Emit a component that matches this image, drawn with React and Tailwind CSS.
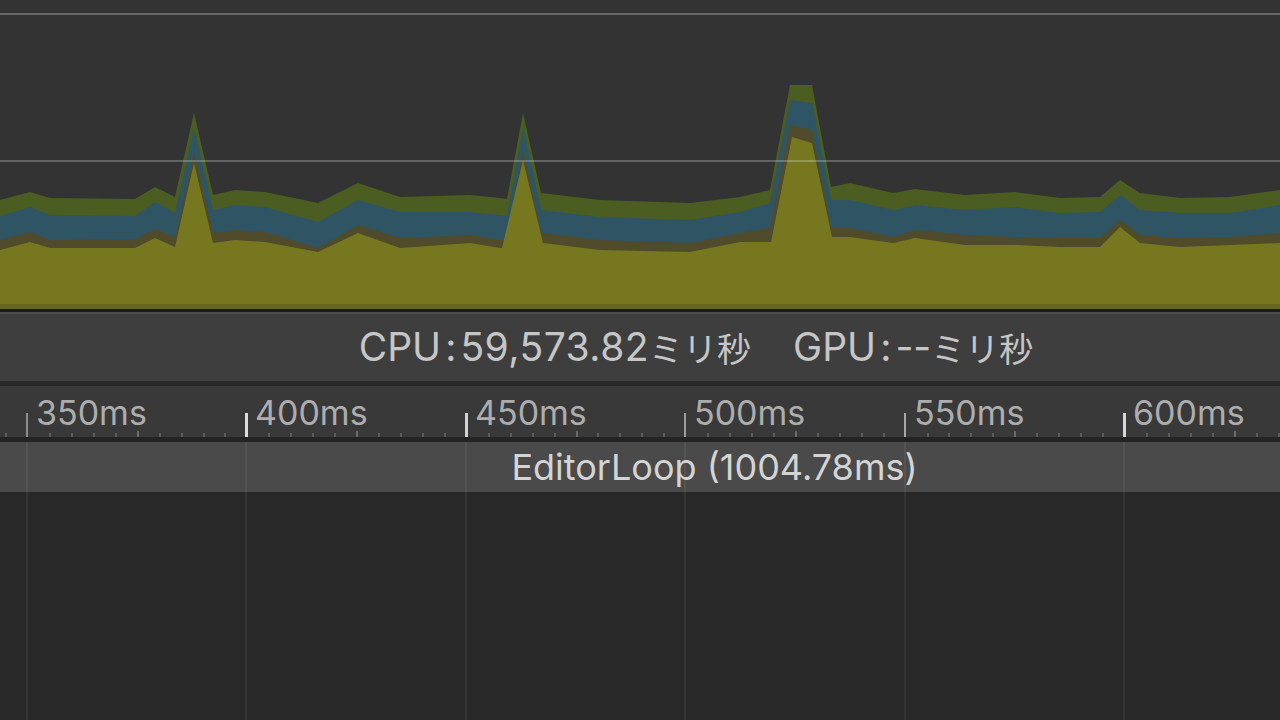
import React from "react";

const FONT = { fontFamily: "Inter, 'Noto Sans CJK JP', 'Noto Sans', sans-serif" };
const CJK = { fontFamily: "'Noto Sans CJK JP', sans-serif" };

// stacked area boundaries, top layer first
const GREEN = [[0,200],[30,192],[50,198],[135,199],[155,187],[175,197],[194,113],[213,195],[235,190],[265,192],[318,203],[358,183],[400,197],[470,195],[500,198],[507,199],[523,113],[541,193],[600,200],[690,203],[740,197],[770,190],[790,85],[812,85],[831,187],[850,183],[893,193],[915,189],[965,195],[1015,192],[1060,198],[1100,197],[1120,180],[1140,193],[1180,198],[1230,197],[1280,190]];
const BLUE = [[0,216],[30,207],[50,215],[135,216],[155,202],[175,213],[194,128],[213,210],[235,205],[265,207],[318,222],[358,200],[400,212],[470,212],[500,215],[507,216],[523,127],[541,210],[600,217],[690,220],[740,212],[770,203],[790,100],[812,103],[831,200],[850,200],[893,210],[915,205],[965,210],[1015,207],[1060,213],[1100,212],[1120,195],[1140,210],[1180,213],[1230,213],[1280,205]];
const DARK = [[0,240],[30,232],[50,240],[135,239],[155,229],[175,237],[194,152],[213,233],[235,230],[265,232],[318,248],[358,225],[400,238],[470,235],[500,240],[507,240],[523,150],[541,233],[600,240],[690,243],[740,233],[770,228],[790,125],[812,130],[831,228],[850,228],[893,237],[915,230],[965,235],[1015,237],[1060,238],[1100,238],[1120,220],[1140,235],[1180,238],[1230,237],[1280,233]];
const YELLOW = [[0,250],[30,242],[50,248],[135,248],[155,238],[175,247],[194,163],[213,243],[235,240],[265,242],[318,252],[358,233],[400,248],[470,243],[500,248],[502,248],[523,160],[543,243],[600,250],[690,252],[740,242],[771,242],[792,137],[812,143],[832,237],[850,237],[893,243],[915,238],[965,245],[1015,245],[1060,247],[1100,247],[1120,227],[1140,243],[1180,247],[1230,245],[1280,243]];

const area = (pts) => "0,309 " + pts.map((p) => p.join(",")).join(" ") + " 1280,309";

const MAJORS = [
  { label: "350ms", tick: "bg-[#8e8e8e] w-[2px]" },
  { label: "400ms", tick: "bg-[#dcdcdc] w-[3px]" },
  { label: "450ms", tick: "bg-[#d2d2d2] w-[3px]" },
  { label: "500ms", tick: "bg-[#9c9c9c] w-[2px]" },
  { label: "550ms", tick: "bg-[#a8a8a8] w-[2px]" },
  { label: "600ms", tick: "bg-[#d6d6d6] w-[3px]" },
];
const START = 27;
const STEP = 219.4;

function Chart() {
  return (
    <div className="relative h-[309px] bg-[#333333]">
      <svg width="1280" height="309" viewBox="0 0 1280 309" className="block">
        <polygon points={area(GREEN)} fill="#4b5d21" />
        <polygon points={area(BLUE)} fill="#2f5565" />
        <polygon points={area(DARK)} fill="#4f4b2b" />
        <polygon points={area(YELLOW)} fill="#777720" />
        <rect x="0" y="304" width="1280" height="5" fill="#66661e" />
        <rect x="0" y="13" width="1280" height="2" fill="#ffffff" fillOpacity="0.25" />
        <rect x="0" y="160" width="1280" height="2" fill="#ffffff" fillOpacity="0.24" />
      </svg>
    </div>
  );
}

function Ruler() {
  const minors = [];
  for (let i = -1; i < 60; i++) {
    const x = START + i * (STEP / 10);
    if (x > 1280) break;
    if (i % 10 === 0) continue;
    const tall = ((i % 10) + 10) % 10 === 5;
    minors.push(
      <div
        key={i}
        className={tall ? "absolute bottom-0 w-[2px] h-[6px] bg-[#6a6a6a]" : "absolute bottom-0 w-[2px] h-[4px] bg-[#5c5c5c]"}
        style={{ left: Math.round(x) }}
      />
    );
  }
  return (
    <div className="relative h-[51px] bg-[#393939] overflow-hidden" style={FONT}>
      {minors}
      {MAJORS.map((m, i) => {
        const x = Math.round(START + i * STEP);
        return (
          <React.Fragment key={m.label}>
            <div className={"absolute bottom-0 h-[24px] " + m.tick} style={{ left: x - 1 }} />
            <div className="absolute top-[10px] text-[34px] leading-none text-[#adadad]" style={{ left: x + 9 }}>
              {m.label}
            </div>
          </React.Fragment>
        );
      })}
    </div>
  );
}

export default function App() {
  return (
    <div className="w-[1280px] h-[720px] overflow-hidden bg-[#282828] flex flex-col">
      <Chart />
      <div className="h-[3px] bg-[#1c1c1c]" />
      <div className="h-[2px] bg-[#4c4c4c]" />
      <div
        className="h-[67px] bg-[#3e3e3e] flex items-center justify-center pl-[112px] text-[39px] text-[#c6c6c6] whitespace-nowrap"
        style={FONT}
      >
        <span>CPU</span>
        <span className="mx-[4px]">:</span>
        <span className="tracking-[0.5px]">59,573.82</span>
        <span className="text-[34px]" style={CJK}>ミリ秒</span>
        <span className="ml-[42px]">GPU</span>
        <span className="mx-[4px]">:</span>
        <span>--</span>
        <span className="text-[34px]" style={CJK}>ミリ秒</span>
      </div>
      <div className="h-[5px] bg-[#282828]" />
      <Ruler />
      <div className="h-[5px] bg-[#232323]" />
      <div className="relative flex-1 flex flex-col">
        <div
          className="h-[50px] bg-[#4a4a4a] flex items-center justify-center pl-[149px] text-[36px] text-[#d4d4d4] whitespace-nowrap"
          style={FONT}
        >
          EditorLoop (1004.78ms)
        </div>
        <div className="flex-1" />
        {MAJORS.map((m, i) => (
          <div
            key={m.label}
            className="absolute top-0 bottom-0 w-[2px] bg-white/[0.06]"
            style={{ left: Math.round(START + i * STEP) - 1 }}
          />
        ))}
      </div>
    </div>
  );
}
